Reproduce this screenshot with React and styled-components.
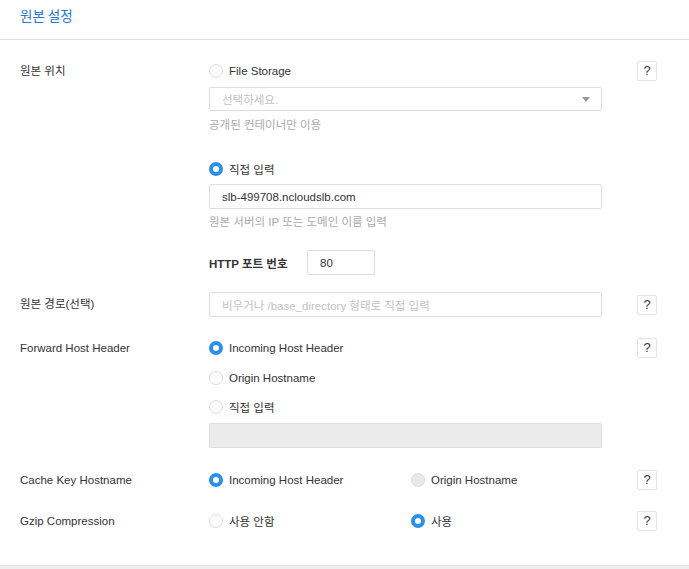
import styled, { createGlobalStyle } from "styled-components";

const GlobalStyle = createGlobalStyle`
  html, body {
    margin: 0;
    padding: 0;
    background: #fff;
  }
  body {
    font-family: "Liberation Sans", "Noto Sans CJK KR", sans-serif;
    color: #333;
    font-size: 11.5px;
  }
`;

const Page = styled.div`
  width: 689px;
  height: 569px;
  display: flex;
  flex-direction: column;
  overflow: hidden;
`;

const Header = styled.div`
  height: 40px;
  border-bottom: 1px solid #e2e2e2;
  padding: 5px 20px 0;
  box-sizing: border-box;
  display: flex;
  align-items: flex-start;
`;

const Title = styled.h2`
  margin: 0;
  font-family: "Noto Sans CJK KR", sans-serif;
  font-size: 13.5px;
  font-weight: 400;
  line-height: 20px;
  color: #1d7bd8;
`;

const Body = styled.div`
  flex: 1;
  padding: 21px 0 0 20px;
  display: flex;
  flex-direction: column;
`;

const Row = styled.div`
  display: grid;
  grid-template-columns: 189px 393px 55px;
  margin-top: ${(p) => p.$mt || 0}px;
`;

const Label = styled.div`
  line-height: ${(p) => p.$lh || 20}px;
  color: #333;
`;

const Field = styled.div`
  display: flex;
  flex-direction: column;
`;

const HelpCell = styled.div`
  height: ${(p) => p.$lh || 20}px;
  display: flex;
  align-items: center;
  justify-content: flex-end;
`;

const HelpButton = styled.button`
  width: 20px;
  height: 20px;
  padding: 0;
  border: 1px solid #e4e4e4;
  border-radius: 2px;
  background: #fff;
  font-family: "Liberation Sans", sans-serif;
  font-size: 13px;
  color: #333;
  line-height: 18px;
  text-align: center;
`;

const Option = styled.label`
  display: flex;
  align-items: center;
  gap: 6px;
  height: 20px;
  margin-top: ${(p) => p.$mt || 0}px;
  color: #333;
`;

const Options = styled.div`
  display: grid;
  grid-template-columns: 202px 1fr;
`;

const Dot = styled.span`
  width: 14px;
  height: 14px;
  border-radius: 50%;
  box-sizing: border-box;
  flex-shrink: 0;
  border: ${(p) =>
    p.$checked ? "4px solid #2a90f0" : "1px solid #dcdcdc"};
  background: ${(p) => (p.$disabled ? "#e8e8e8" : "#fff")};
`;

const Input = styled.div`
  height: 25px;
  box-sizing: border-box;
  border: 1px solid #dedede;
  border-radius: 2px;
  background: ${(p) => (p.$disabled ? "#ebebeb" : "#fff")};
  padding: 0 12px;
  display: flex;
  align-items: center;
  color: ${(p) => (p.$placeholder ? "#c2c2c2" : "#333")};
  margin-top: ${(p) => p.$mt || 0}px;
  width: ${(p) => p.$w || "auto"};
`;

const Select = styled(Input)`
  height: 24px;
  justify-content: space-between;
  padding-right: 11px;
`;

const Caret = styled.span`
  width: 0;
  height: 0;
  border-left: 4px solid transparent;
  border-right: 4px solid transparent;
  border-top: 5px solid #999;
`;

const Hint = styled.div`
  line-height: 14px;
  color: #aaa;
  margin-top: ${(p) => p.$mt || 0}px;
`;

const PortRow = styled.div`
  display: flex;
  align-items: center;
  margin-top: 21px;
`;

const PortLabel = styled.span`
  width: 98px;
  font-weight: 700;
  color: #333;
`;

const Radio = ({ checked, disabled, children, mt }) => (
  <Option $mt={mt}>
    <Dot $checked={checked} $disabled={disabled} />
    {children}
  </Option>
);

const Help = ({ lh }) => (
  <HelpCell $lh={lh}>
    <HelpButton>?</HelpButton>
  </HelpCell>
);

const Footer = styled.div`
  height: 3px;
  background: #efefef;
  border-top: 1px solid #e4e4e4;
`;

export default function App() {
  return (
    <Page>
      <GlobalStyle />
      <Header>
        <Title>원본 설정</Title>
      </Header>
      <Body>
        <Row>
          <Label>원본 위치</Label>
          <Field>
            <Radio>File Storage</Radio>
            <Select $placeholder $mt={6}>
              선택하세요.
              <Caret />
            </Select>
            <Hint $mt={7}>공개된 컨테이너만 이용</Hint>
            <Radio checked mt={27}>
              직접 입력
            </Radio>
            <Input $mt={5}>slb-499708.ncloudslb.com</Input>
            <Hint $mt={6}>원본 서버의 IP 또는 도메인 이름 입력</Hint>
            <PortRow>
              <PortLabel>HTTP 포트 번호</PortLabel>
              <Input $w="68px">80</Input>
            </PortRow>
          </Field>
          <Help />
        </Row>

        <Row $mt={17}>
          <Label $lh={25}>원본 경로(선택)</Label>
          <Field>
            <Input $placeholder>비우거나 /base_directory 형태로 직접 입력</Input>
          </Field>
          <Help lh={25} />
        </Row>

        <Row $mt={21}>
          <Label>Forward Host Header</Label>
          <Field>
            <Radio checked>Incoming Host Header</Radio>
            <Radio mt={10}>Origin Hostname</Radio>
            <Radio mt={9}>직접 입력</Radio>
            <Input $disabled $mt={6} />
          </Field>
          <Help />
        </Row>

        <Row $mt={22}>
          <Label>Cache Key Hostname</Label>
          <Options>
            <Radio checked>Incoming Host Header</Radio>
            <Radio disabled>Origin Hostname</Radio>
          </Options>
          <Help />
        </Row>

        <Row $mt={21}>
          <Label>Gzip Compression</Label>
          <Options>
            <Radio>사용 안함</Radio>
            <Radio checked>사용</Radio>
          </Options>
          <Help />
        </Row>
      </Body>
      <Footer />
    </Page>
  );
}
